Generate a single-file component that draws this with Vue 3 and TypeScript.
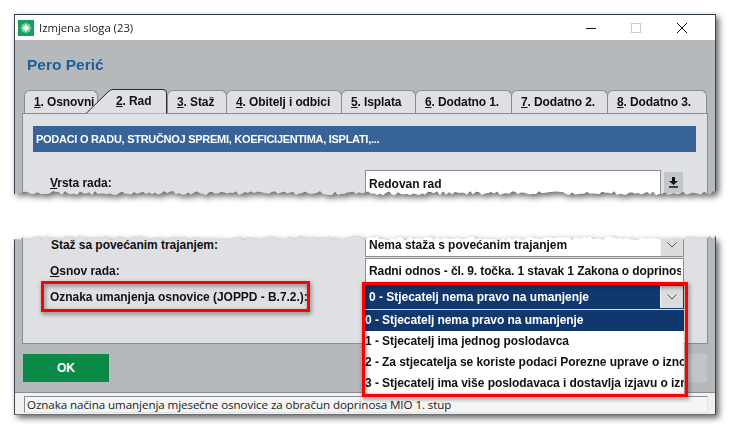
<script setup lang="ts">
function tear(edge: 'top' | 'bottom', seed: number): string {
  let s = seed
  const rnd = () => {
    s = (s * 9301 + 49297) % 233280
    return s / 233280
  }
  const pts: string[] = []
  const w = 702
  const d = 4
  if (edge === 'bottom') {
    pts.push('0 0', `${w}px 0`)
    for (let x = w; x > 0; x -= 3) pts.push(`${x}px calc(100% - ${(rnd() * d).toFixed(1)}px)`)
    pts.push('0 100%')
  } else {
    for (let x = 0; x < w; x += 3) pts.push(`${x}px ${(rnd() * d).toFixed(1)}px`)
    pts.push(`${w}px 0`, `${w}px 100%`, '0 100%')
  }
  return `polygon(${pts.join(',')})`
}
const tearBottom = { clipPath: tear('bottom', 17) }
const tearTop = { clipPath: tear('top', 91) }

const tabsAfter = [
  { k: '3', t: '. Staž', w: 60 },
  { k: '4', t: '. Obitelj i odbici', w: 116 },
  { k: '5', t: '. Isplata', w: 75 },
  { k: '6', t: '. Dodatno 1.', w: 97 },
  { k: '7', t: '. Dodatno 2.', w: 97 },
  { k: '8', t: '. Dodatno 3.', w: 100 },
]
const options = [
  '0 - Stjecatelj nema pravo na umanjenje',
  '1 - Stjecatelj ima jednog poslodavca',
  '2 - Za stjecatelja se koriste podaci Porezne uprave o izno',
  '3 - Stjecatelj ima više poslodavaca i dostavlja izjavu o izn',
]
</script>

<template>
  <div class="page">
    <div class="shadow">
      <section class="win top-piece" :style="tearBottom">
        <header class="titlebar">
          <svg class="appicon" width="16" height="16" viewBox="0 0 16 16">
            <defs>
              <radialGradient id="glow">
                <stop offset="0" stop-color="#fff" />
                <stop offset="1" stop-color="#fff" stop-opacity="0" />
              </radialGradient>
            </defs>
            <rect width="16" height="16" fill="#12a05c" />
            <circle cx="8" cy="8" r="6" fill="url(#glow)" />
            <path d="M8 2 8.700 7.300 14 8 8.700 8.700 8 14 7.300 8.700 2 8 7.300 7.300Z" fill="#fff" />
            <path d="M4.500 4.500l7 7M11.500 4.500l-7 7" stroke="#e6fbef" stroke-width=".7" />
          </svg>
          <span class="title">Izmjena sloga (23)</span>
          <svg class="winctl" width="112" height="12" viewBox="0 0 112 12">
            <path d="M0 6.500h10" stroke="#111" fill="none" />
            <rect x="45.500" y="1.500" width="9" height="9" stroke="#ccc" fill="none" />
            <path d="M91 1l10 10M101 1 91 11" stroke="#111" fill="none" />
          </svg>
        </header>
        <div class="body">
          <h1 class="person">Pero Perić</h1>
          <div class="tabs">
            <div class="tab first"><span><u>1</u>. Osnovni</span></div>
            <div class="tab active">
              <svg class="activebg" width="82" height="25" viewBox="0 0 82 25">
                <path d="M0 24.500 22 3Q24 .5 27 .5H77Q80.500 .5 80.500 4V24.500" fill="#dfe0e4" stroke="#2b2b2b" />
              </svg>
              <span><u>2</u>. Rad</span>
            </div>
            <div v-for="tab in tabsAfter" :key="tab.k" class="tab" :style="{ width: tab.w + 'px' }">
              <span><u>{{ tab.k }}</u>{{ tab.t }}</span>
            </div>
          </div>
          <div class="panel">
            <div class="banner">PODACI O RADU, STRUČNOJ SPREMI, KOEFICIJENTIMA, ISPLATI,...</div>
            <div class="row first-row">
              <label class="lbl"><u>V</u>rsta rada:</label>
              <div class="field w295">Redovan rad</div>
              <button class="dl" type="button" aria-label="Preuzmi">
                <svg width="9" height="11" viewBox="0 0 9 11">
                  <path d="M3 0h3v4h3L4.500 8 0 4h3Z" fill="#111" />
                  <path d="M0 10h9" stroke="#111" stroke-width="1.500" />
                </svg>
              </button>
            </div>
          </div>
        </div>
      </section>
    </div>

    <div class="shadow">
      <section class="win bottom-piece" :style="tearTop">
        <div class="body2">
          <div class="panel2">
            <div class="row r1">
              <label class="lbl shift">Staž sa povećanim trajanjem:</label>
              <div class="field combo">
                <span class="val">Nema staža s povećanim trajanjem</span>
                <span class="arrow"><svg width="10" height="6" viewBox="0 0 10 6"><path d="M.5.500 5 5 9.500.500" fill="none" stroke="#555" /></svg></span>
              </div>
            </div>
            <div class="row r2">
              <label class="lbl"><u>O</u>snov rada:</label>
              <div class="field full"><span class="val">Radni odnos - čl. 9. točka. 1 stavak 1 Zakona o doprinos</span></div>
            </div>
            <div class="row r3">
              <label class="lbl">Oznaka umanjenja osnovice (JOPPD - B.7.2.):</label>
              <div class="field combo selected">
                <span class="val">0 - Stjecatelj nema pravo na umanjenje</span>
                <span class="arrow"><svg width="10" height="6" viewBox="0 0 10 6"><path d="M.5.500 5 5 9.500.500" fill="none" stroke="#555" /></svg></span>
              </div>
            </div>
          </div>
          <div class="actions">
            <button class="ok" type="button">OK</button>
            <button class="cancel" type="button" aria-label="Odustani"></button>
          </div>
          <footer class="status">
            <div class="statusfield">Oznaka načina umanjenja mjesečne osnovice za obračun doprinosa MIO 1. stup</div>
          </footer>
        </div>
        <ul class="popup">
          <li v-for="(o, i) in options" :key="o" :class="{ on: i === 0 }">{{ o }}</li>
        </ul>
      </section>
    </div>
    <div class="mark mark-label"></div>
    <div class="mark mark-combo"></div>
  </div>
</template>

<style>
html, body { margin: 0; background: #fff; }
</style>

<style scoped>
.page {
  position: relative;
  width: 731px;
  height: 431px;
  box-sizing: border-box;
  padding: 14px 0 0 14px;
  overflow: hidden;
  background: #fff;
  font-family: "Liberation Sans", Arial, sans-serif;
  font-size: 12px;
  font-weight: 700;
  color: #111;
  display: flex;
  flex-direction: column;
  gap: 41px;
}
.shadow {
  width: 702px;
  filter: drop-shadow(3px 3px 3px rgba(0, 0, 0, .6));
}
.win {
  position: relative;
  box-sizing: border-box;
  width: 702px;
  background: #b6b9bb;
  border-left: 1px solid #3c4650;
  border-right: 1px solid #3c4650;
}
.top-piece { height: 181px; border-top: 1px solid #2f3b48; }
.bottom-piece { height: 179px; border-bottom: 1px solid #6b6f72; }
.titlebar {
  height: 25px;
  background: #fff;
  display: flex;
  align-items: center;
  padding-left: 3px;
}
.appicon { flex: none; }
.title {
  margin-left: 5px;
  font: 400 11.3px "Open Sans", sans-serif;
  color: #222;
  flex: 1;
}
.winctl { flex: none; margin-right: 17px; }
.body { height: 155px; }
.person {
  margin: 0;
  padding: 15px 0 0 12px;
  height: 50px;
  box-sizing: border-box;
  font: 700 15.5px/20px "Liberation Sans", sans-serif;
  color: #1a5f9c;
}
.tabs {
  display: flex;
  height: 24px;
  margin-top: -1px;
  padding-left: 9px;
  position: relative;
  z-index: 1;
  align-items: flex-end;
  letter-spacing: -.1px;
}
.tab {
  position: relative;
  box-sizing: border-box;
  height: 23px;
  padding: 4px 0 0 9px;
  background: #dfe0e4;
  border: 1px solid #8b8d90;
  border-bottom: 0;
  border-radius: 6px 6px 0 0;
  white-space: nowrap;
}
.tab + .tab { margin-left: -1px; }
.tab.first { width: 74px; margin-right: -12px; }
.tab.active {
  width: 81px;
  height: 25px;
  margin-right: 1px;
  padding: 5px 0 0 30px;
  margin-bottom: -1px;
  margin-left: 0;
  background: none;
  border: 0;
  z-index: 2;
}
.activebg { position: absolute; left: 0; top: 0; }
.tab span { position: relative; }
.panel {
  box-sizing: border-box;
  height: 82px;
  margin: 0 7px 0 7px;
  padding: 12px 11px 0 10px;
  background: #dfe0e4;
  border: 1px solid #8b8d90;
  border-bottom: 0;
}
.banner {
  height: 26px;
  padding-left: 3px;
  background: #376399;
  color: #fff;
  font-size: 11px;
  line-height: 27px;
  letter-spacing: -.28px;
  white-space: nowrap;
}
.row { display: flex; align-items: center; }
.first-row { margin-top: 18px; padding-left: 17px; align-items: flex-start; }
.lbl {
  flex: none;
  width: 315px;
  box-sizing: border-box;
  font-size: 12px;
  letter-spacing: -.04px;
}
.first-row .lbl { padding-top: 6px; }
.field {
  box-sizing: border-box;
  background: #fff;
  border: 1px solid #8b8d90;
  white-space: nowrap;
  overflow: hidden;
  padding-left: 3px;
  display: flex;
  align-items: center;
}
.w295 { width: 296px; height: 27px; letter-spacing: -.02px; }
.dl {
  margin: 2px 0 0 3px;
  width: 19px;
  height: 21px;
  padding: 0;
  border: 0;
  background: #c3c6c8;
  display: flex;
  align-items: center;
  justify-content: center;
}
.body2 {
  display: flex;
  flex-direction: column;
  height: 178px;
}
.panel2 {
  box-sizing: border-box;
  height: 108px;
  margin: 0 7px 0 7px;
  padding-left: 27px;
  background: #dfe0e4;
  border: 1px solid #8b8d90;
  border-top: 0;
}
.r1 { height: 25px; margin-top: -4px; }
.r2 { height: 25px; margin-top: 1px; }
.r3 { height: 24px; margin-top: 2px; }
.shift { padding-left: 1px; }
.combo { width: 319px; height: 100%; letter-spacing: -.02px; }
.full { width: 319px; height: 100%; letter-spacing: -.1px; padding-right: 2px; }
.val { flex: 1; overflow: hidden; }
.arrow {
  flex: none;
  width: 22px;
  align-self: stretch;
  background: #dcdcdc;
  display: flex;
  align-items: center;
  justify-content: center;
  border-left: 1px solid #f4f4f4;
}
.selected { background: #10386f; color: #fff; border: 1px solid #10386f; }
.actions {
  flex: none;
  height: 48px;
  box-sizing: border-box;
  padding: 10px 8px 0 8px;
  display: flex;
  justify-content: space-between;
}
.ok {
  width: 86px;
  height: 28px;
  border: 0;
  padding: 0;
  background: #0b8a47;
  color: #fff;
  font: 700 12px "Liberation Sans", sans-serif;
}
.cancel { width: 86px; height: 28px; border: 0; background: #c2c5c7; }
.status {
  flex: 1;
  box-sizing: border-box;
  background: #f0f0f0;
  border-top: 1px solid #8b8d90;
  padding: 3px 7px 0 9px;
}
.statusfield {
  box-sizing: border-box;
  height: 17px;
  padding-left: 2px;
  background: #f5f5f5;
  border: 1px solid #e2e2e2;
  border-left-color: #8b8d90;
  border-top-color: #8b8d90;
  font: 400 11.6px/15px "Open Sans", sans-serif;
  letter-spacing: -.08px;
  color: #222;
  white-space: nowrap;
}
.popup {
  position: absolute;
  left: 350px;
  top: 74px;
  width: 319px;
  height: 83px;
  margin: 0;
  padding: 0;
  list-style: none;
  background: #fff;
  overflow: hidden;
  white-space: nowrap;
  letter-spacing: -.06px;
}
.popup li { height: 21px; line-height: 21px; }
.popup li.on { background: #10386f; color: #fff; }
.mark {
  position: absolute;
  box-sizing: border-box;
  border: 3px solid #f00;
  filter: drop-shadow(1px 2px 2px rgba(0, 0, 0, .5));
}
.mark-label { left: 41px; top: 281px; width: 269px; height: 31px; }
.mark-combo { left: 362px; top: 282px; width: 326px; height: 115px; }
</style>
